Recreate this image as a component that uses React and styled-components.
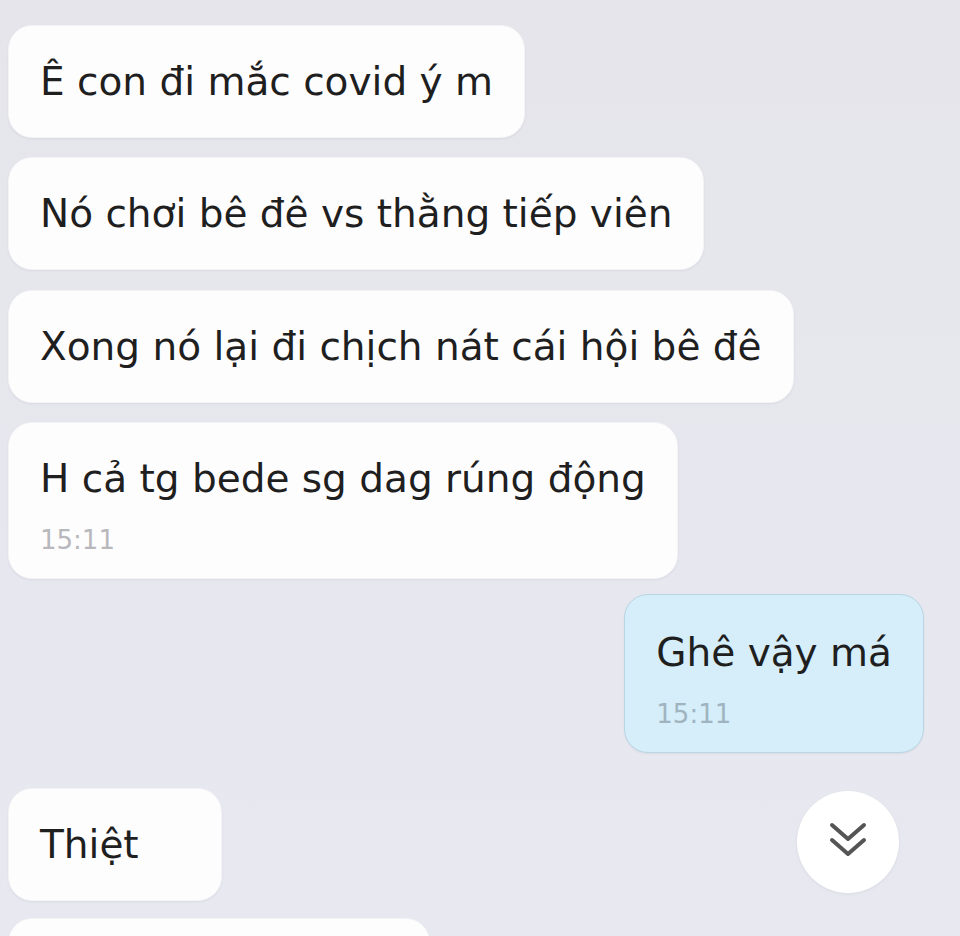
import React from 'react';
import styled, { createGlobalStyle } from 'styled-components';

const messages = [
    { id: 1, text: 'Ê con đi mắc covid ý m', mt: 0 },
    { id: 2, text: 'Nó chơi bê đê vs thằng tiếp viên', mt: 19 },
    { id: 3, text: 'Xong nó lại đi chịch nát cái hội bê đê', mt: 20 },
    { id: 4, text: 'H cả tg bede sg dag rúng động', time: '15:11', mt: 19 },
    { id: 5, text: 'Ghê vậy má', time: '15:11', mine: true, mt: 15 },
    { id: 6, text: 'Thiệt', width: 214, mt: 35 },
    { id: 7, text: '', width: 422, mt: 17 },
];

function App() {
    return (
        <Screen>
            <GlobalStyle />
            <Thread>
                {messages.map((m) => (
                    <Row key={m.id} $mine={m.mine} $mt={m.mt}>
                        <Bubble
                            $mine={m.mine}
                            $timed={!!m.time}
                            style={m.width ? { width: m.width } : undefined}
                        >
                            <Text>{m.text || '\u00a0'}</Text>
                            {m.time && <Time $mine={m.mine}>{m.time}</Time>}
                        </Bubble>
                    </Row>
                ))}
            </Thread>
            <ScrollDown aria-label='scroll down'>
                <svg width='44' height='44' viewBox='0 0 44 44' fill='none'>
                    <polyline points='6,5 22,19 38,5' stroke='#555' strokeWidth='4' strokeLinecap='round' strokeLinejoin='round' />
                    <polyline points='6,20 22,34 38,20' stroke='#555' strokeWidth='4' strokeLinecap='round' strokeLinejoin='round' />
                </svg>
            </ScrollDown>
        </Screen>
    );
}

const GlobalStyle = createGlobalStyle`
    html, body {
        margin: 0;
        padding: 0;
        background: #e7e7ef;
        overflow: hidden;
    }
`;

const Screen = styled.div`
    position: relative;
    width: 960px;
    height: 936px;
    overflow: hidden;
    background: linear-gradient(180deg, #e5e5eb 0%, #e8e8f1 100%);
    font-family: 'DejaVu Sans', 'Liberation Sans', sans-serif;
    color: #1f1f1f;
`;

const Thread = styled.div`
    display: flex;
    flex-direction: column;
    padding: 25px 36px 0 8px;
`;

const Row = styled.div`
    display: flex;
    justify-content: ${(p) => (p.$mine ? 'flex-end' : 'flex-start')};
    margin-top: ${(p) => p.$mt}px;
`;

const Bubble = styled.div`
    box-sizing: border-box;
    padding: ${(p) => (p.$mine ? '35px 31px 22px' : p.$timed ? '33px 31px 22px' : '33px 31px 32px')};
    border-radius: 24px;
    background: ${(p) => (p.$mine ? '#d5eefa' : '#fefdfe')};
    border: 1px solid ${(p) => (p.$mine ? '#b9d6e4' : '#f4f4f7')};
    box-shadow: 0 1px 2px rgba(60, 60, 90, 0.08);
`;

const Text = styled.div`
    font-size: 39px;
    line-height: 46px;
    white-space: nowrap;
`;

const Time = styled.div`
    margin-top: 22px;
    font-size: 26px;
    line-height: 32px;
    color: ${(p) => (p.$mine ? '#9fb4bf' : '#b8b8bc')};
`;

const ScrollDown = styled.div`
    position: absolute;
    left: 797px;
    top: 791px;
    width: 102px;
    height: 102px;
    border-radius: 50%;
    background: #fff;
    box-shadow: 0 1px 3px rgba(60, 60, 90, 0.08);
    display: flex;
    align-items: center;
    justify-content: center;
`;

export default App;
